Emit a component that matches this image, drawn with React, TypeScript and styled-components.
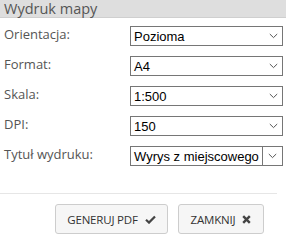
import React from "react";
import styled, { createGlobalStyle } from "styled-components";

const Global = createGlobalStyle`
  html, body { margin: 0; padding: 0; background: #fff; }
  body { font-family: "Open Sans", sans-serif; }
`;

const Panel = styled.div`
  width: 286px;
  height: 242px;
  background: #fff;
  display: flex;
  flex-direction: column;
`;

const Header = styled.div`
  height: 17px;
  background: #dedede;
  border-bottom: 1px solid #cfcfcf;
  color: #555;
  font-size: 14.5px;
  line-height: 17px;
  padding-left: 4px;
`;

const Form = styled.div`
  display: flex;
  flex-direction: column;
  gap: 10px;
  padding: 8px 3px 0 4px;
`;

const Row = styled.div`
  display: grid;
  grid-template-columns: 126px 1fr;
  align-items: center;
  height: 20px;
`;

const Label = styled.div`
  color: #555;
  font-size: 13px;
  line-height: 16px;
  margin-top: -4px;
`;

const SelectBox = styled.div`
  height: 20px;
  box-sizing: border-box;
  border: 1px solid #767676;
  display: flex;
  align-items: center;
  justify-content: space-between;
  padding: 0 4px 0 3px;
  font-family: "Liberation Sans", Arial, sans-serif;
  font-size: 13px;
  color: #000;
`;

const Combo = styled.div`
  display: flex;
  height: 20px;
`;

const ComboText = styled.div`
  flex: 1;
  box-sizing: border-box;
  border: 1px solid #767676;
  display: flex;
  align-items: center;
  padding-left: 3px;
  font-family: "Liberation Sans", Arial, sans-serif;
  font-size: 13px;
  color: #000;
  white-space: nowrap;
  overflow: hidden;
`;

const ComboButton = styled.div`
  width: 20px;
  box-sizing: border-box;
  border: 1px solid #767676;
  border-left: none;
  display: flex;
  align-items: center;
  justify-content: center;
`;

const Separator = styled.div`
  height: 1px;
  background: #e6e6e6;
  width: 277px;
  margin-top: 27px;
`;

const Footer = styled.div`
  display: flex;
  gap: 10px;
  padding: 10px 0 0 55px;
`;

const Button = styled.button<{ $w: number }>`
  width: ${(p) => p.$w}px;
  height: 30px;
  box-sizing: border-box;
  border: 1px solid #cdcdcd;
  border-radius: 3px;
  background: #f6f6f6;
  color: #333;
  font-family: "Open Sans", sans-serif;
  font-size: 11.5px;
  display: flex;
  align-items: center;
  justify-content: center;
  gap: 7px;
  padding: 0;
  letter-spacing: -0.2px;
`;

const Chevron = () => (
  <svg width="9" height="6" viewBox="0 0 9 6">
    <path d="M0.8 1 L4.5 4.6 L8.2 1" fill="none" stroke="#555" strokeWidth="1" />
  </svg>
);

const Check = () => (
  <svg width="11" height="9" viewBox="0 0 11 9">
    <path d="M1 4.8 L4 7.6 L10 1.4" fill="none" stroke="#444" strokeWidth="2.2" />
  </svg>
);

const Times = () => (
  <svg width="9" height="9" viewBox="0 0 9 9">
    <path d="M1.2 1.2 L7.8 7.8 M7.8 1.2 L1.2 7.8" fill="none" stroke="#444" strokeWidth="2.4" />
  </svg>
);

const rows = [
  { label: "Orientacja:", value: "Pozioma" },
  { label: "Format:", value: "A4" },
  { label: "Skala:", value: "1:500" },
  { label: "DPI:", value: "150" },
];

export default function App() {
  return (
    <>
      <Global />
      <Panel>
        <Header>Wydruk mapy</Header>
        <Form>
          {rows.map((r) => (
            <Row key={r.label}>
              <Label>{r.label}</Label>
              <SelectBox>
                <span>{r.value}</span>
                <Chevron />
              </SelectBox>
            </Row>
          ))}
          <Row>
            <Label>Tytuł wydruku:</Label>
            <Combo>
              <ComboText>Wyrys z miejscowego</ComboText>
              <ComboButton>
                <Chevron />
              </ComboButton>
            </Combo>
          </Row>
        </Form>
        <Separator />
        <Footer>
          <Button $w={113}>
            GENERUJ PDF <Check />
          </Button>
          <Button $w={86}>
            ZAMKNIJ <Times />
          </Button>
        </Footer>
      </Panel>
    </>
  );
}
